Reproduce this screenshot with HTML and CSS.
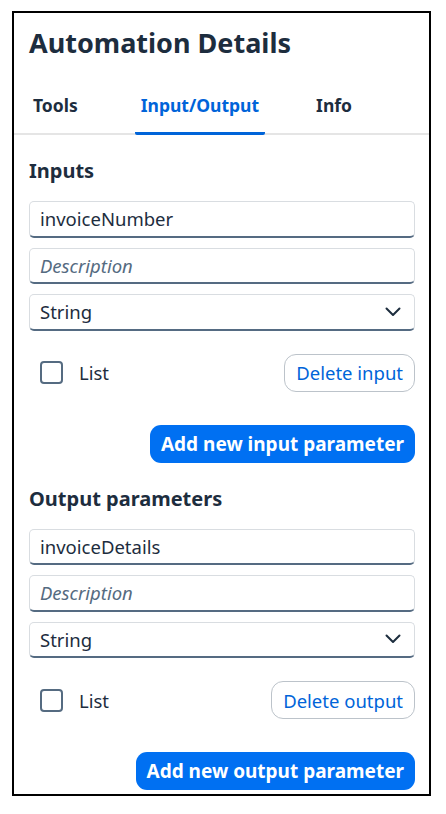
FILE: index.html
```html
<!DOCTYPE html>
<html lang="en">
<head>
    <meta charset="UTF-8">
    <meta name="viewport" content="width=device-width, initial-scale=1.0">
    <title>Automation Details</title>
    <link rel="stylesheet" href="styles.css">
</head>
<body>
    <div class="panel">
        <h1 class="title">Automation Details</h1>

        <div class="tabs">
            <div class="tab">Tools</div>
            <div class="tab active">Input/Output</div>
            <div class="tab">Info</div>
        </div>

        <div class="section">
            <h2>Inputs</h2>
            <div class="field">invoiceNumber</div>
            <div class="field placeholder">Description</div>
            <div class="field select">
                String
                <svg class="chevron" width="16" height="10" viewBox="0 0 16 10">
                    <polyline points="1.5,1.5 8,8 14.5,1.5" fill="none" stroke="#1d2d3e" stroke-width="2" stroke-linecap="round" stroke-linejoin="round"/>
                </svg>
            </div>
            <div class="row">
                <label class="check"><span class="box"></span>List</label>
                <button class="btn-ghost">Delete input</button>
            </div>
            <div class="actions">
                <button class="btn-primary">Add new input parameter</button>
            </div>
        </div>

        <div class="section">
            <h2>Output parameters</h2>
            <div class="field">invoiceDetails</div>
            <div class="field placeholder">Description</div>
            <div class="field select">
                String
                <svg class="chevron" width="16" height="10" viewBox="0 0 16 10">
                    <polyline points="1.5,1.5 8,8 14.5,1.5" fill="none" stroke="#1d2d3e" stroke-width="2" stroke-linecap="round" stroke-linejoin="round"/>
                </svg>
            </div>
            <div class="row">
                <label class="check"><span class="box"></span>List</label>
                <button class="btn-ghost">Delete output</button>
            </div>
            <div class="actions">
                <button class="btn-primary">Add new output parameter</button>
            </div>
        </div>
    </div>
</body>
</html>
```

FILE: styles.css
```css
body {
    margin: 0;
    background: #ffffff;
    font-family: 'Noto Sans', 'Open Sans', sans-serif;
    color: #1d2d3e;
}
.panel {
    box-sizing: border-box;
    width: 419px;
    height: 785px;
    margin: 11px 0 0 12px;
    border: 2px solid #000000;
    overflow: hidden;
}
.title {
    margin: 0;
    padding: 12px 14px 0 15px;
    font-size: 27px;
    line-height: 36px;
    font-weight: 700;
}
.tabs {
    display: flex;
    margin-top: 32px;
    padding-left: 13px;
    border-bottom: 2px solid #e5e5e5;
}
.tab {
    padding: 0 6px 15px;
    font-size: 17.5px;
    line-height: 24px;
    font-weight: 700;
    border-bottom: 3px solid transparent;
    margin-bottom: -2px;
}
.tab:first-child {
    padding-right: 15px;
    margin-right: 42px;
}
.tab.active {
    color: #0064d9;
    border-bottom-color: #0064d9;
    border-radius: 2px;
    margin-right: 45px;
}
.section {
    padding: 0 14px 0 15px;
}
.section h2 {
    margin: 23px 0 17px;
    font-size: 20px;
    line-height: 26px;
    font-weight: 700;
}
.field {
    box-sizing: border-box;
    height: 36.5px;
    margin-bottom: 10px;
    padding: 0 11px 0 10px;
    display: flex;
    align-items: center;
    justify-content: space-between;
    font-size: 18.5px;
    border: 1px solid #d9dde1;
    border-bottom: 2px solid #556b82;
    border-radius: 5px;
}
.placeholder {
    color: #556b81;
    font-style: italic;
}
.chevron {
    margin-right: 2px;
}
.row {
    display: flex;
    align-items: center;
    justify-content: space-between;
    margin-top: 23px;
}
.check {
    display: flex;
    align-items: center;
    gap: 16px;
    padding-left: 11px;
    font-size: 18.5px;
}
.box {
    box-sizing: border-box;
    width: 23px;
    height: 23px;
    border: 2px solid #556b81;
    border-radius: 4px;
}
button {
    font-family: inherit;
    font-size: 18.5px;
    height: 38px;
    padding: 0 11px;
    border-radius: 12px;
    cursor: pointer;
}
.btn-ghost {
    background: #ffffff;
    color: #0064d9;
    border: 1px solid #bcc3ca;
}
.btn-primary {
    background: #0070f2;
    color: #ffffff;
    border: none;
    font-size: 19px;
    font-weight: 700;
    border-radius: 11px;
}
.actions {
    display: flex;
    justify-content: flex-end;
    margin-top: 33px;
}
```
